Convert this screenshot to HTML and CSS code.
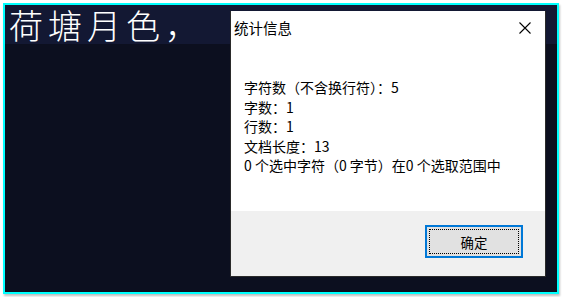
FILE: index.html
```html
<!DOCTYPE html>
<html lang="zh-CN">
<head>
    <meta charset="UTF-8">
    <title>统计信息</title>
    <link rel="stylesheet" href="styles.css">
</head>
<body>
    <div class="window">
        <div class="editor-line">荷塘月色，</div>

        <div class="dialog">
            <div class="dialog-title">
                <span>统计信息</span>
                <svg class="close" width="12" height="12" viewBox="0 0 12 12">
                    <path d="M0.5 0.5 L11.5 11.5 M11.5 0.5 L0.5 11.5" stroke="#000" stroke-width="1.1" fill="none"/>
                </svg>
            </div>
            <div class="dialog-body">
                <p>字符数（不含换行符）：5</p>
                <p>字数：1</p>
                <p>行数：1</p>
                <p>文档长度：13</p>
                <p>0 个选中字符（0 字节）在0 个选取范围中</p>
            </div>
            <div class="dialog-footer">
                <button class="ok-btn"><span>确定</span></button>
            </div>
        </div>
    </div>
</body>
</html>
```

FILE: styles.css
```css
body {
    margin: 0;
    background-color: #ffffff;
    font-family: "Noto Sans CJK SC", "Noto Sans", sans-serif;
}

.window {
    position: relative;
    margin: 3px;
    width: 556px;
    height: 291px;
    box-sizing: border-box;
    border: 2px solid #00ffff;
    background-color: #0c0f1f;
    box-shadow: 1px 2px 2px rgba(0, 0, 0, 0.25);
}

.editor-line {
    height: 39px;
    background-color: #131833;
    color: #ffffff;
    font-size: 34px;
    line-height: 40px;
    font-weight: 300;
    padding-left: 4px;
    letter-spacing: 5px;
}

.dialog {
    position: absolute;
    left: 225px;
    top: 6px;
    width: 316px;
    height: 266px;
    box-sizing: border-box;
    background-color: #ffffff;
    border: 1px solid #2a2a2a;
    border-top: none;
    display: flex;
    flex-direction: column;
}

.dialog-title {
    height: 32px;
    display: flex;
    align-items: center;
    justify-content: space-between;
    padding: 0 14px 0 3px;
    font-size: 14.5px;
    color: #000;
}

.close {
    margin-top: 1px;
}

.dialog-body {
    flex: 1;
    padding: 35px 0 0 13px;
    font-size: 14px;
    color: #000;
}

.dialog-body p {
    margin: 0;
    line-height: 19.6px;
}

.dialog-footer {
    height: 65px;
    background-color: #f0f0f0;
    display: flex;
    justify-content: flex-end;
    align-items: flex-start;
    padding: 14px 22px 0 0;
    box-sizing: border-box;
}

.ok-btn {
    width: 98px;
    height: 33px;
    padding: 2px;
    background-color: #e1e1e1;
    border: 2px solid #0078d7;
    font-family: inherit;
    font-size: 13.4px;
    color: #000;
    cursor: pointer;
    box-sizing: border-box;
}

.ok-btn span {
    display: flex;
    align-items: center;
    justify-content: center;
    height: 100%;
    border: 1px dotted #000;
    box-sizing: border-box;
}
```
